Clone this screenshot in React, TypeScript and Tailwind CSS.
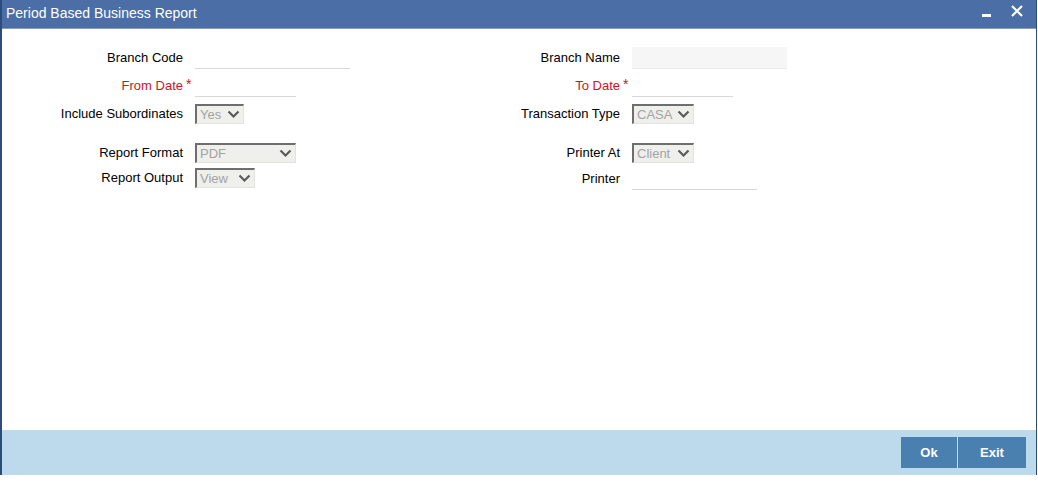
import type { ReactNode } from 'react';

function Chevron() {
  return (
    <svg width="13" height="9" viewBox="0 0 13 9" className="shrink-0">
      <path d="M1.5 1.5 L6.5 6.5 L11.5 1.5" fill="none" stroke="#5a5a5a" strokeWidth="2.2" />
    </svg>
  );
}

function FakeSelect({ value, width }: { value: string; width: string }) {
  return (
    <div
      className={`${width} h-[20px] flex items-center justify-between pl-[3px] pr-[3px] bg-[#efefec] border-t-2 border-l-2 border-t-[#6e6e6e] border-l-[#6e6e6e] border-b border-r border-b-[#e2e2e2] border-r-[#e2e2e2] text-[13px] leading-none text-[#a3a3a3]`}
    >
      <span>{value}</span>
      <Chevron />
    </div>
  );
}

function TextLine({ width, disabled = false }: { width: string; disabled?: boolean }) {
  return (
    <div
      className={`${width} h-[22px] border-b border-[#d8d8d8] ${disabled ? 'bg-[#f6f6f6] border-[#ececec]' : 'bg-white'}`}
    />
  );
}

function Row({
  label,
  required = false,
  height = 'h-[28px]',
  labelWidth = 'w-[183px]',
  children,
}: {
  label: string;
  required?: boolean;
  height?: string;
  labelWidth?: string;
  children: ReactNode;
}) {
  return (
    <div className={`flex items-center ${height}`}>
      <div
        className={`${labelWidth} text-right text-[13px] whitespace-nowrap ${required ? 'text-[#d2102a]' : 'text-black'}`}
      >
        {label}
      </div>
      <div className="w-[12px] self-start pt-[5px] pl-[3px] text-[14px] leading-none text-[#d2102a]">
        {required ? '*' : ''}
      </div>
      {children}
    </div>
  );
}

export default function App() {
  return (
    <div
      className="w-[1038px] h-[483px] bg-white"
      style={{ fontFamily: '"Liberation Sans", Arial, sans-serif' }}
    >
      <div className="w-[1037px] h-[475px] flex flex-col border-l-2 border-r border-[#2c4c7c]">
        {/* title bar */}
        <div className="h-[29px] flex items-center justify-between bg-[#4a6ea5] border-b border-[#8c9eac] pl-[4px] pr-[13px] shrink-0">
          <span className="text-[14px] text-white -mt-[2px]">Period Based Business Report</span>
          <div className="flex items-center gap-[20px]">
            <div className="w-[9px] h-[3px] bg-white mt-[2px]" />
            <svg width="12" height="12" viewBox="0 0 12 12" className="-mt-[7px]">
              <path d="M1 1 L11 11 M11 1 L1 11" stroke="white" strokeWidth="2.2" />
            </svg>
          </div>
        </div>

        {/* body */}
        <div className="flex-1 flex pt-[15px]">
          <div className="w-[435px] flex flex-col">
            <Row label="Branch Code" labelWidth="w-[181px]">
              <TextLine width="w-[155px]" />
            </Row>
            <Row label="From Date" required labelWidth="w-[181px]">
              <TextLine width="w-[101px]" />
            </Row>
            <Row label="Include Subordinates" labelWidth="w-[181px]">
              <FakeSelect value="Yes" width="w-[49px]" />
            </Row>
            <div className="h-[12px]" />
            <Row label="Report Format" height="h-[26px]" labelWidth="w-[181px]">
              <FakeSelect value="PDF" width="w-[101px]" />
            </Row>
            <Row label="Report Output" height="h-[24px]" labelWidth="w-[181px]">
              <FakeSelect value="View" width="w-[60px]" />
            </Row>
          </div>
          <div className="flex flex-col">
            <Row label="Branch Name">
              <TextLine width="w-[155px]" disabled />
            </Row>
            <Row label="To Date" required>
              <TextLine width="w-[101px]" />
            </Row>
            <Row label="Transaction Type">
              <FakeSelect value="CASA" width="w-[62px]" />
            </Row>
            <div className="h-[12px]" />
            <Row label="Printer At" height="h-[26px]">
              <FakeSelect value="Client" width="w-[62px]" />
            </Row>
            <Row label="Printer" height="h-[26px]">
              <TextLine width="w-[125px]" />
            </Row>
          </div>
        </div>

        {/* footer */}
        <div className="h-[45px] bg-[#bdd9ec] flex items-center justify-end pr-[10px] shrink-0">
          <div className="flex h-[31px]">
            <button
              type="button"
              className="w-[57px] h-full bg-[#4a80b0] text-white text-[13px] font-bold border-r border-[#c8dcec]"
            >
              Ok
            </button>
            <button
              type="button"
              className="w-[68px] h-full bg-[#4a80b0] text-white text-[13px] font-bold"
            >
              Exit
            </button>
          </div>
        </div>
      </div>
    </div>
  );
}
